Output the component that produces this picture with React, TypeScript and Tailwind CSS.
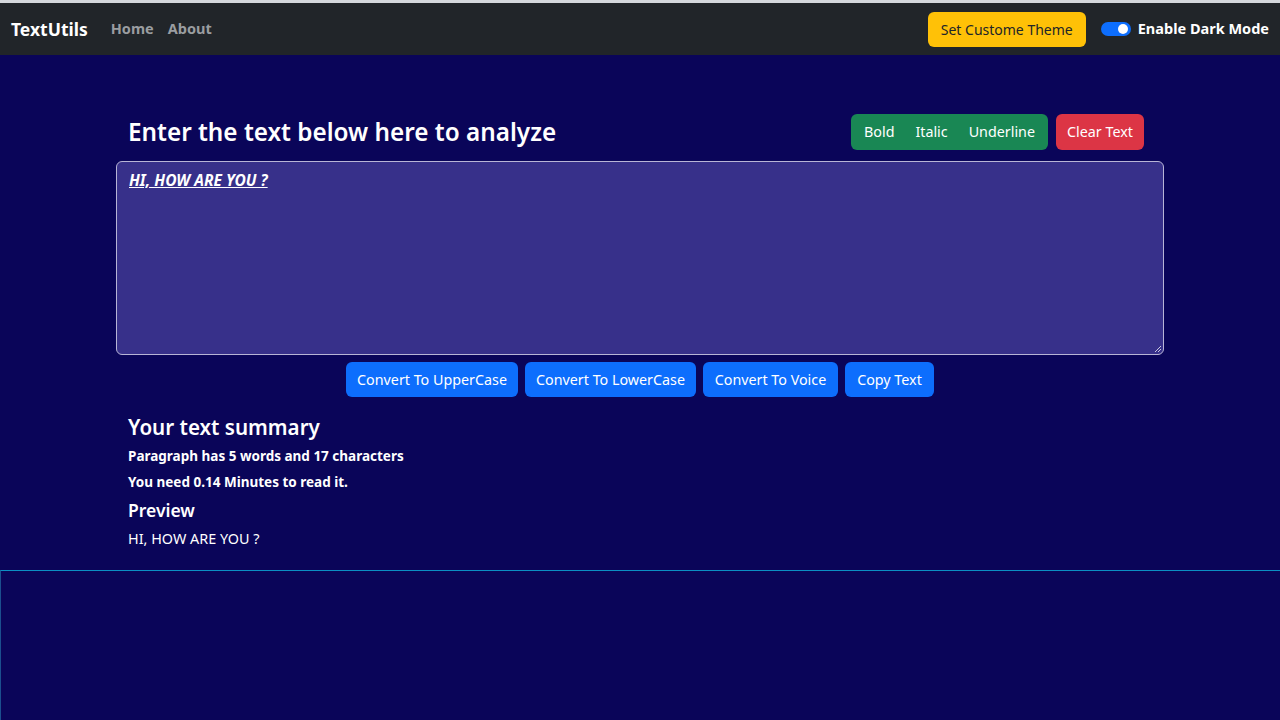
export default function App() {
  const text = "HI, HOW ARE YOU ?";
  return (
    <div className="min-h-[720px] bg-[#0a0559] font-['Noto_Sans',sans-serif] text-white">
      <div className="h-[3px] bg-[#d5d8dc]" />
      <nav className="flex h-[52px] items-center justify-between bg-[#212529] pl-[11px] pr-[11px]">
        <div className="flex items-center">
          <span className="text-[17.5px] font-bold">TextUtils</span>
          <a className="ml-[23px] text-[14.5px] font-bold text-[#9a9da0]">Home</a>
          <a className="ml-[14px] text-[14.5px] font-bold text-[#9a9da0]">About</a>
        </div>
        <div className="flex items-center">
          <button className="h-[35px] w-[158px] rounded-md bg-[#ffc107] text-[14px] text-[#212529]">Set Custome Theme</button>
          <div className="ml-[15px] flex h-[14px] w-[30px] items-center justify-end rounded-full bg-[#0d6efd] pr-[3px]">
            <div className="h-[10px] w-[10px] rounded-full bg-white" />
          </div>
          <span className="ml-[7px] text-[14.5px] font-bold">Enable Dark Mode</span>
        </div>
      </nav>

      <div className="mx-auto w-[1048px] pt-[59px]">
        <div className="ml-3 mr-5 flex items-center justify-between">
          <h3 className="text-[24.3px] font-semibold leading-[36px]">Enter the text below here to analyze</h3>
          <div className="flex">
            <div className="flex h-[36px] w-[197px] items-center justify-between overflow-hidden rounded-md bg-[#198754] px-[13px] text-[14.3px]">
              <button>Bold</button>
              <button>Italic</button>
              <button>Underline</button>
            </div>
            <button className="ml-2 h-[36px] w-[88px] rounded-md bg-[#dc3545] text-[14.3px]">Clear Text</button>
          </div>
        </div>
        <div className="relative mt-[11px] h-[194px] rounded-md border border-[#b8b5d6] bg-[#37308a] px-3 pt-[6px]">
          <span className="text-[15.5px] font-bold italic underline">{text}</span>
          <svg className="absolute bottom-[1px] right-[1px]" width="8" height="8" viewBox="0 0 8 8">
            <path d="M7 1 L1 7 M7 4 L4 7" stroke="#c9c6e0" strokeWidth="1" />
          </svg>
        </div>
        <div className="mt-[7px] flex justify-center gap-[7px]">
          {[
            ["Convert To UpperCase", "w-[172px]"],
            ["Convert To LowerCase", "w-[171px]"],
            ["Convert To Voice", "w-[135px]"],
            ["Copy Text", "w-[89px]"],
          ].map(([b, w]) => (
            <button key={b} className={`h-[35px] rounded-md bg-[#0d6efd] text-[14.3px] ${w}`}>
              {b}
            </button>
          ))}
        </div>
        <div className="mx-3 mt-[15px]">
          <h2 className="text-[20.6px] font-semibold leading-[30px]">Your text summary</h2>
          <p className="mt-[4px] text-[13.5px] font-bold leading-[20px]">Paragraph has 5 words and 17 characters</p>
          <p className="mt-[6px] text-[13.5px] font-bold leading-[20px]">You need 0.14 Minutes to read it.</p>
          <h4 className="mt-[5px] text-[17.5px] font-semibold leading-[26px]">Preview</h4>
          <p className="mt-[6px] text-[14.4px] leading-[20px]">{text}</p>
        </div>
      </div>
      <div className="mt-[21px] h-[150px] border-l border-t border-l-[#1b4f8e] border-t-[#0b8fc4]" />
    </div>
  );
}
